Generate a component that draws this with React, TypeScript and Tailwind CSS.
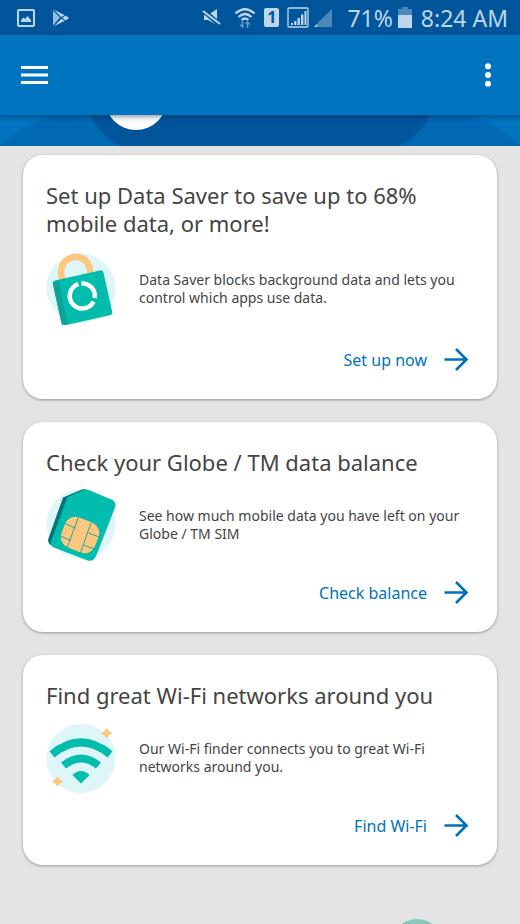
import React from 'react';

// Define the tip shown inside each card
type Tip = {
  id: number;
  title: string;
  text: string;
  action: string;
  icon: React.ReactNode;
  spacing: string;
  footer: string;
};

const SaverIcon = () => (
  <svg className="w-[72px] h-[72px] shrink-0" viewBox="46 253 72 72" fill="none" aria-hidden="true">
    <circle cx="81" cy="288" r="34.5" fill="#dff6f9" />
    <path d="M62.6 281L61.8 277C56.5 257 83 248.500 89.500 267L90.500 274" stroke="#fdc77f" strokeWidth="6.500" />
    <rect x="56.500" y="275" width="52" height="46" rx="3" transform="rotate(-12.500 82 298)" fill="#02bcae" />
    <path d="M55.500 281.400L58.500 280.700L67.500 324L64.500 324.700C63 325 61.900 324.300 61.500 323L53.200 285C52.900 283 53.600 281.800 55.500 281.400Z" fill="#0fa398" />
    <path d="M81.400 283.500A12.500 12.500 0 0 1 94.600 298.200" stroke="#fff" strokeWidth="4.500" />
    <path d="M93.500 301.500A12.500 12.500 0 1 1 78.400 284.100" stroke="#fff" strokeWidth="4.500" />
  </svg>
);

const SimIcon = () => (
  <svg className="w-[72px] h-[72px] shrink-0" viewBox="46 489 72 72" fill="none" aria-hidden="true">
    <circle cx="81" cy="524" r="34.5" fill="#dff6f9" />
    <path d="M63 497.500L82 489.500C84 488.900 86 489.300 88 490.100L93 492L62 549.500L54 547C49 545 47 541.500 48.600 538Z" fill="#04737a" />
    <path d="M67.500 497L84 489.700C85.500 489.100 87 489.500 88.500 490.100L111.500 499.500C115 501 116.400 504 115 507.500L96.500 555C94.800 559.600 91.500 562 87 560.300L54.500 547.800C51 546.300 50 543.500 51.500 540Z" fill="#02bcae" />
    <rect x="62" y="519" width="36" height="32" rx="11" transform="rotate(22 80 535)" fill="#fdc77f" />
    <path d="M78.500 517L67 548M91 523L80 554M64.500 523.500L75.500 528M60 536L71 540.500M88.500 533L99.500 537M83.500 545L94.500 549" stroke="#0fa398" strokeWidth="0.900" />
  </svg>
);

const WifiIcon = () => (
  <svg className="w-[72px] h-[72px] shrink-0" viewBox="46 722 72 72" fill="none" aria-hidden="true">
    <circle cx="81" cy="758.5" r="34.5" fill="#dff6f9" />
    <path d="M52 754.300Q81 730.500 110 754.300" stroke="#02bcae" strokeWidth="8" />
    <path d="M63.500 765.500Q81 751.500 98.500 765.500" stroke="#02bcae" strokeWidth="8" />
    <path d="M72.500 775Q81 767 89.500 775L81 783.500Z" fill="#02bcae" />
    <path d="M106.500 728.500Q108 732 111.800 733.200Q108 734.500 106.500 738Q105 734.500 101.500 733.200Q105 732 106.500 728.500Z" fill="#fdc77f" stroke="#fdc77f" />
    <path d="M57.500 777Q59 780.200 62.500 781.400Q59 782.600 57.500 786Q56 782.600 52.500 781.400Q56 780.200 57.500 777Z" fill="#fdc77f" stroke="#fdc77f" />
  </svg>
);

const tips: Tip[] = [
  {
    id: 1,
    title: 'Set up Data Saver to save up to 68% mobile data, or more!',
    text: 'Data Saver blocks background data and lets you control which apps use data.',
    action: 'Set up now',
    icon: <SaverIcon />,
    spacing: 'mt-4',
    footer: 'mt-[23px]',
  },
  {
    id: 2,
    title: 'Check your Globe / TM data balance',
    text: 'See how much mobile data you have left on your Globe / TM SIM',
    action: 'Check balance',
    icon: <SimIcon />,
    spacing: 'mt-[13px]',
    footer: 'mt-5',
  },
  {
    id: 3,
    title: 'Find great Wi-Fi networks around you',
    text: 'Our Wi-Fi finder connects you to great Wi-Fi networks around you.',
    action: 'Find Wi-Fi',
    icon: <WifiIcon />,
    spacing: 'mt-[13px]',
    footer: 'mt-5',
  },
];

const StatusBar = () => (
  <div className="h-[35px] pl-4 pr-3 flex items-center justify-between bg-[#00559b] text-[#bdd6ec]">
    <div className="flex items-center gap-4">
      <svg width="20" height="20" viewBox="0 0 20 20" fill="none" aria-hidden="true">
        <rect x="2" y="2" width="16" height="16" rx="1" stroke="currentColor" strokeWidth="2" />
        <path d="M5 14V12L7.500 9.500L9 11L11.500 8L15 12V14Z" fill="currentColor" />
      </svg>
      <svg width="18" height="18" viewBox="0 0 18 18" fill="currentColor" aria-hidden="true">
        <path d="M1 1.500L8 8.500L1 16.500Z" opacity="0.800" />
        <path d="M2 0.800L12.500 6L9.500 8.300Z" />
        <path d="M2 17.200L12.500 12L9.500 9.700Z" />
        <path d="M13.300 6.400L17.300 9L13.300 11.600L10.500 9Z" />
      </svg>
    </div>
    <div className="flex items-center">
      <svg width="20" height="20" viewBox="0 0 20 20" aria-hidden="true">
        <path d="M2 7H6L15 1V17L6 12H2Z" fill="currentColor" />
        <path d="M1 2L18 17" stroke="#00559b" strokeWidth="5" />
        <path d="M1 3L18 16" stroke="currentColor" strokeWidth="2" />
      </svg>
      <svg className="ml-3" width="22" height="22" viewBox="0 0 22 22" fill="none" stroke="currentColor" strokeWidth="2.300" aria-hidden="true">
        <path d="M1.500 6.500Q11 -2 20.500 6.500M4.500 10Q11 4 17.500 10M7.500 13Q11 10 14.500 13" />
        <path d="M8.500 14V20M6 17.500L8.500 20L9.500 18M13.500 21V15M11.500 17L13.500 15L16 17.500" strokeWidth="1.500" opacity="0.550" />
      </svg>
      <span className="ml-2 w-[15px] h-[19px] rounded-xs bg-[#bdd6ec] text-[#00559b] text-base leading-[19px] font-bold text-center">1</span>
      <svg className="ml-2" width="22" height="21" viewBox="0 0 22 21" fill="currentColor" aria-hidden="true">
        <rect x="1" y="1" width="20" height="19" rx="1" fill="none" stroke="currentColor" strokeWidth="1.300" />
        <path d="M4 16H6V18H4ZM7.200 14H9.400V18H7.200ZM10.500 11H12.900V18H10.500ZM14 7.500H16.400V18H14ZM17.500 4H19.500V18H17.500Z" />
      </svg>
      <svg className="ml-1" width="20" height="20" viewBox="0 0 20 20" fill="currentColor" aria-hidden="true">
        <path d="M19 1V19H5V14.500Z" opacity="0.400" />
        <path d="M1 19L4.500 15.500V19Z" />
      </svg>
      <span className="ml-3.5 text-[23px] leading-7">71%</span>
      <svg className="ml-1" width="16" height="22" viewBox="0 0 16 22" fill="currentColor" aria-hidden="true">
        <path d="M5 0H11V2H15V8H1V2H5Z" opacity="0.400" />
        <path d="M1 8H15V21H1Z" />
      </svg>
      <span className="ml-2 text-[23px] leading-7">8:24 AM</span>
    </div>
  </div>
);

const AppBar = () => (
  <header className="relative z-10 h-20 px-[21px] flex items-center justify-between bg-[#0074be] shadow-[0_2px_5px_rgba(0,30,80,0.45)]">
    <button aria-label="Open menu" className="flex">
      <svg width="27" height="20" viewBox="0 0 27 20" fill="#fff">
        <path d="M0 1H27V4H0ZM0 8.500H27V11.500H0ZM0 16H27V19H0Z" />
      </svg>
    </button>
    <button aria-label="More options" className="flex">
      <svg width="24" height="24" viewBox="0 0 24 24" fill="#fff">
        <circle cx="13" cy="3.300" r="3" />
        <circle cx="13" cy="12" r="3" />
        <circle cx="13" cy="20.700" r="3" />
      </svg>
    </button>
  </header>
);

// Bottom part of the hero that is left after scrolling
const Hero = () => (
  <svg className="block w-full h-[31px]" viewBox="0 0 520 31" preserveAspectRatio="xMidYMin slice" aria-hidden="true">
    <rect width="520" height="31" fill="#0074be" />
    <path d="M0 30Q22 11 49 0H472Q500 12 520 30V31H0Z" fill="#0069b4" />
    <path d="M90 0Q99 20 120 31H399Q421 20 430 0Z" fill="#00559b" />
    <circle cx="136" cy="-16" r="32" fill="#003f7d" opacity="0.500" />
    <circle cx="136" cy="-16" r="31" fill="#fff" />
  </svg>
);

const TipCard = ({ tip }: { tip: Tip }) => (
  <section className="pt-[26px] pb-[27px] px-[23px] bg-white rounded-[20px] shadow-[0_1px_3px_rgba(0,0,0,0.35)]">
    <h2 className="text-[22px] leading-7 text-[#444444]">{tip.title}</h2>
    <div className={`flex items-center gap-[21px] ${tip.spacing}`}>
      {tip.icon}
      <p className="text-sm leading-[18px] text-[#444444]">{tip.text}</p>
    </div>
    <div className={`flex justify-end ${tip.footer}`}>
      <a href="#" className="flex items-center gap-4 pr-[5px] text-base leading-6 text-[#0072b9]">
        {tip.action}
        <svg width="26" height="24" viewBox="0 0 26 24" fill="none" stroke="currentColor" strokeWidth="2.600" aria-hidden="true">
          <path d="M1.500 11.500H23M13 1L23.500 11.500L13 22" />
        </svg>
      </a>
    </div>
  </section>
);

export default function App() {
  return (
    <div className="relative min-h-screen overflow-hidden bg-[#e4e4e4] font-['Noto_Sans',sans-serif]">
      <StatusBar />
      <AppBar />
      <Hero />
      <main className="pt-[9px] px-[23px] pb-14 flex flex-col gap-[23px]">
        {tips.map((tip) => (
          <TipCard key={tip.id} tip={tip} />
        ))}
      </main>
      {/* Floating bubble peeking in from the bottom edge */}
      <div className="absolute -bottom-12 right-[77px] w-[52px] h-[53px] rounded-full bg-[#88c8bb]"></div>
    </div>
  );
}
